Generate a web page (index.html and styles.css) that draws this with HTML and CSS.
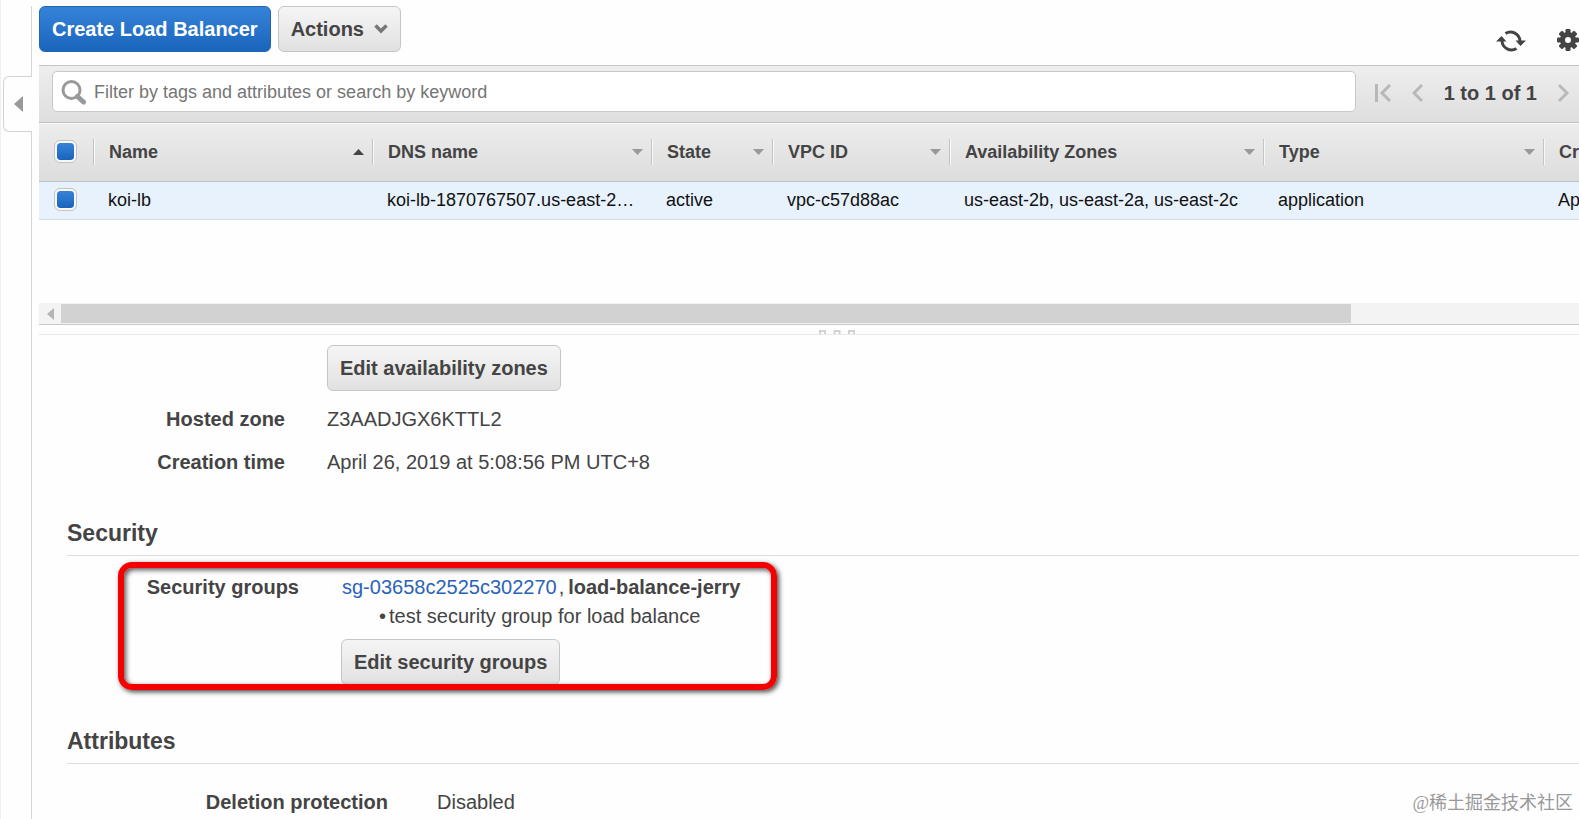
FILE: index.html
```html
<!DOCTYPE html>
<html lang="en">
<head>
<meta charset="utf-8">
<title>Load Balancers</title>
<link rel="stylesheet" href="styles.css">
</head>
<body>
<div class="page">
  <aside class="rail">
    <button class="rail-tab" type="button" aria-label="Collapse navigation">
      <svg width="9" height="16" viewBox="0 0 9 16"><path d="M9 0v16L0 8z" fill="#999"/></svg>
    </button>
  </aside>
  <main class="main">
    <div class="toolbar">
      <button class="btn btn-primary" type="button">Create Load Balancer</button>
      <button class="btn" type="button">Actions
        <svg width="14" height="10" viewBox="0 0 14 10"><path d="M1.500 1.500 7 7l5.500-5.500" fill="none" stroke="#777" stroke-width="3.500"/></svg>
      </button>
      <div class="tools">
        <button class="icon-btn" type="button" aria-label="Refresh">
          <svg width="30" height="24" viewBox="0 0 30 24">
            <g fill="none" stroke="#444" stroke-width="3"><path d="M9.500 4.500A9.500 9.500 0 0 1 24 12"/><path d="M20.500 19.500A9.500 9.500 0 0 1 6 12"/></g>
            <path d="M19.500 11.500H30L24.500 17zM0 12.500h10.500L5.500 7z" fill="#444"/>
          </svg>
        </button>
        <button class="icon-btn" type="button" aria-label="Settings">
          <svg width="22" height="22" viewBox="-11 -11 22 22">
            <g fill="#444"><rect x="-2.500" y="-11" width="5" height="22" rx="1"/><rect x="-2.500" y="-11" width="5" height="22" rx="1" transform="rotate(45)"/><rect x="-2.500" y="-11" width="5" height="22" rx="1" transform="rotate(90)"/><rect x="-2.500" y="-11" width="5" height="22" rx="1" transform="rotate(135)"/><circle r="8"/></g>
            <circle r="3" fill="#fff"/>
          </svg>
        </button>
      </div>
    </div>

    <div class="filter">
      <label class="search">
        <svg width="26" height="26" viewBox="0 0 26 26"><circle cx="10.500" cy="11" r="8.500" fill="none" stroke="#999" stroke-width="3"/><path d="m16.500 17.500 6 5.500" stroke="#999" stroke-width="5" stroke-linecap="round"/></svg>
        <input type="text" placeholder="Filter by tags and attributes or search by keyword" aria-label="Filter">
      </label>
      <div class="pager">
        <button class="icon-btn" type="button" aria-label="First page"><svg width="17" height="20" viewBox="0 0 17 20"><path d="M1.500 1v18M15 2 7 10l8 8" fill="none" stroke="#b8b8b8" stroke-width="3"/></svg></button>
        <button class="icon-btn" type="button" aria-label="Previous page"><svg width="11" height="20" viewBox="0 0 11 20"><path d="M10 2 2 10l8 8" fill="none" stroke="#b8b8b8" stroke-width="3"/></svg></button>
        <span class="range">1 to 1 of 1</span>
        <button class="icon-btn" type="button" aria-label="Next page"><svg width="11" height="20" viewBox="0 0 11 20"><path d="m1 2 8 8-8 8" fill="none" stroke="#b8b8b8" stroke-width="3"/></svg></button>
      </div>
    </div>

    <div class="table-wrap">
      <table class="grid">
        <colgroup><col class="c-check"><col class="c-name"><col class="c-name"><col class="c-state"><col class="c-vpc"><col class="c-zones"><col class="c-type"><col></colgroup>
        <thead>
          <tr>
            <th><input class="check" type="checkbox" checked aria-label="Select all"></th>
            <th><div class="head">Name<svg width="11" height="6" viewBox="0 0 11 6"><path d="M0 6 5.500 0 11 6z" fill="#444"/></svg></div></th>
            <th><div class="head">DNS name<svg width="11" height="6" viewBox="0 0 11 6"><path d="M0 0h11L5.500 6z" fill="#999"/></svg></div></th>
            <th><div class="head">State<svg width="11" height="6" viewBox="0 0 11 6"><path d="M0 0h11L5.500 6z" fill="#999"/></svg></div></th>
            <th><div class="head">VPC ID<svg width="11" height="6" viewBox="0 0 11 6"><path d="M0 0h11L5.500 6z" fill="#999"/></svg></div></th>
            <th><div class="head">Availability Zones<svg width="11" height="6" viewBox="0 0 11 6"><path d="M0 0h11L5.500 6z" fill="#999"/></svg></div></th>
            <th><div class="head">Type<svg width="11" height="6" viewBox="0 0 11 6"><path d="M0 0h11L5.500 6z" fill="#999"/></svg></div></th>
            <th><div class="head">Created At</div></th>
          </tr>
        </thead>
        <tbody>
          <tr>
            <td><input class="check" type="checkbox" checked aria-label="Select koi-lb"></td>
            <td>koi-lb</td>
            <td>koi-lb-1870767507.us-east-2…</td>
            <td>active</td>
            <td>vpc-c57d88ac</td>
            <td>us-east-2b, us-east-2a, us-east-2c</td>
            <td>application</td>
            <td>April 26</td>
          </tr>
        </tbody>
      </table>
    </div>
    <div class="scrollbar">
      <svg width="7" height="12" viewBox="0 0 7 12"><path d="M7 0v12L0 6z" fill="#b5b5b5"/></svg>
      <div class="track"><div class="thumb"></div></div>
    </div>
    <div class="splitter">
      <svg width="38" height="4" viewBox="0 0 38 4"><g fill="none" stroke="#d2d2d2" stroke-width="2"><path d="M2 4V1h5v3M16.500 4V1h5v3M31 4V1h5v3"/></g></svg>
    </div>

    <section class="details">
      <div class="row"><span></span><div><button class="btn" type="button">Edit availability zones</button></div></div>
      <div class="row field"><b>Hosted zone</b><span>Z3AADJGX6KTTL2</span></div>
      <div class="row field"><b>Creation time</b><span>April 26, 2019 at 5:08:56 PM UTC+8</span></div>

      <h2>Security</h2>
      <div class="security">
        <b>Security groups</b>
        <div>
          <p class="group"><a href="#sg">sg-03658c2525c302270</a><span>,</span><b>load-balance-jerry</b></p>
          <ul><li>test security group for load balance</li></ul>
          <button class="btn" type="button">Edit security groups</button>
        </div>
        <div class="callout"></div>
      </div>

      <h2>Attributes</h2>
      <div class="row attrs"><b>Deletion protection</b><span>Disabled</span></div>
    </section>
  </main>
  <div class="watermark" lang="zh">@稀土掘金技术社区</div>
</div>
</body>
</html>
```
FILE: styles.css
```css
* { box-sizing: border-box; }

body {
  margin: 0;
  background: #fefefe;
  color: #444;
  font: 20px/30px "Liberation Sans", Arial, sans-serif;
}

.page {
  position: relative;
  display: flex;
  min-height: 100vh;
  overflow: hidden;
  border-left: 1px solid #f0f0f0;
}

.rail {
  flex: none;
  width: 31px;
  margin: 6px 7px 0 0;
  padding: 70px 0 0 2px;
  border-right: 1px solid #d5d5d5;
}

.rail-tab {
  display: flex;
  align-items: center;
  width: 29px;
  height: 56px;
  padding: 0 0 0 10px;
  border: 1px solid #d5d5d5;
  border-right: 0;
  border-radius: 6px 0 0 6px;
  background: #fefefe;
}

.main { flex: 1; min-width: 0; }

.toolbar {
  display: flex;
  gap: 7px;
  height: 65px;
  padding: 6px 0 0;
}

.btn {
  display: inline-flex;
  align-items: center;
  gap: 10px;
  height: 46px;
  padding: 0 12px 1px;
  border: 1px solid #c6c6c6;
  border-radius: 6px;
  background: linear-gradient(#f5f5f5, #e1e1e1);
  color: #444;
  font: bold 20px/30px "Liberation Sans", Arial, sans-serif;
  white-space: nowrap;
}

.btn-primary {
  border-color: #1f66b5;
  background: linear-gradient(#3583d9, #1a65bb);
  color: #fff;
}

.tools {
  display: flex;
  gap: 31px;
  height: 100%;
  margin-left: auto;
  padding-top: 23px;
  align-items: flex-start;
}

.icon-btn {
  display: flex;
  padding: 0;
  border: 0;
  background: none;
}

.filter {
  display: flex;
  align-items: flex-start;
  height: 58px;
  padding: 5px 10px 0 13px;
  border-top: 1px solid #c4c4c4;
  border-bottom: 1px solid #c0c0c0;
  background: linear-gradient(#eee, #dedede);
}

.search {
  display: flex;
  flex: 1;
  align-items: center;
  gap: 7px;
  height: 41px;
  padding: 0 8px;
  border: 1px solid #c8c8c8;
  border-radius: 5px;
  background: #fff;
}

.search input {
  flex: 1;
  min-width: 0;
  padding: 0;
  border: 0;
  outline: 0;
  background: none;
  font: 18px/26px "Liberation Sans", Arial, sans-serif;
}

.search input::placeholder { color: #757575; opacity: 1; }

.pager {
  display: flex;
  align-items: center;
  gap: 20px;
  height: 44px;
  padding-left: 19px;
}

.range {
  padding: 0 1px;
  font-size: 20px;
  font-weight: bold;
  white-space: nowrap;
}

.table-wrap {
  height: 180px;
  overflow: hidden;
}

.grid {
  width: 120%;
  min-width: 1640px;
  table-layout: fixed;
  border-collapse: separate;
  border-spacing: 0;
  font-size: 18px;
  line-height: 26px;
}

.c-check { width: 54px; }
.c-name { width: 279px; }
.c-state { width: 121px; }
.c-vpc { width: 177px; }
.c-zones { width: 314px; }
.c-type { width: 280px; }

.grid thead tr { background: linear-gradient(#ededed, #dcdcdc); }

.grid th {
  height: 59px;
  padding: 0 0 2px;
  border-bottom: 1px solid #b9c3cf;
  border-top: 1px solid #f8f8f8;
  text-align: left;
}

.grid td {
  height: 38px;
  padding: 0 14px 2px 15px;
  border-bottom: 1px solid #d3dde6;
  background: #e8f2fc;
  color: #111;
  white-space: nowrap;
}

.grid th:first-child,
.grid td:first-child { padding-left: 15px; }

.head {
  display: flex;
  align-items: center;
  justify-content: space-between;
  padding: 0 8px 0 15px;
  border-left: 1px solid #c4c4c4;
  box-shadow: inset 1px 0 #f8f8f8;
  white-space: nowrap;
}

.check {
  display: block;
  width: 23px;
  height: 23px;
  margin: 0;
  padding: 2px;
  border: 1px solid #c4c4c4;
  border-radius: 6px;
  background: linear-gradient(#3583d9, #1a65bb) content-box, #f8f8f8;
  box-shadow: inset 0 0 0 2px #f8f8f8;
  appearance: none;
}

.scrollbar {
  display: flex;
  align-items: center;
  gap: 7px;
  height: 22px;
  padding-left: 8px;
  border-bottom: 1px solid #c8c8c8;
  background: #f3f3f3;
}

.track { flex: 1; }

.thumb {
  width: 85%;
  height: 19px;
  background: #d2d2d2;
}

.splitter {
  display: flex;
  align-items: flex-end;
  justify-content: center;
  height: 10px;
  padding-left: 56px;
  border-bottom: 1px solid #e8e8e8;
}

.details { padding: 10px 0 0 28px; }

.row {
  display: grid;
  grid-template-columns: 218px 1fr;
  column-gap: 42px;
}

.row > b { text-align: right; }

.row .btn { vertical-align: top; }

.field { padding-top: 13px; }

h2 {
  margin: 0;
  padding: 39px 0 5px;
  border-bottom: 1px solid #ddd;
  font-size: 23px;
  line-height: 34px;
}

.security {
  position: relative;
  display: grid;
  grid-template-columns: 232px 1fr;
  column-gap: 42px;
  padding-top: 16px;
}

.security > b { text-align: right; }

.group { display: flex; margin: 0; padding-left: 1px; }
.group span { margin: 0 4px 0 2px; }
.group a { color: #2a63b8; text-decoration: none; }

.security ul {
  margin: 0;
  padding: 0 0 8px 38px;
  line-height: 29px;
  list-style: none;
}

.security li::before { content: "•"; margin-right: 3px; }

.callout {
  position: absolute;
  top: 6px;
  bottom: -5px;
  left: 51px;
  width: 659px;
  border: 6px solid #f40000;
  border-radius: 14px;
  box-shadow: 2px 2px 5px #444, inset 2px 2px 5px #555;
  pointer-events: none;
}

.attrs {
  grid-template-columns: 321px 1fr;
  column-gap: 49px;
  padding-top: 23px;
}

.watermark {
  position: absolute;
  right: 6px;
  bottom: 2px;
  color: #999;
  font: 18px/28px "Liberation Serif", "Noto Sans CJK SC", serif;
}
```
